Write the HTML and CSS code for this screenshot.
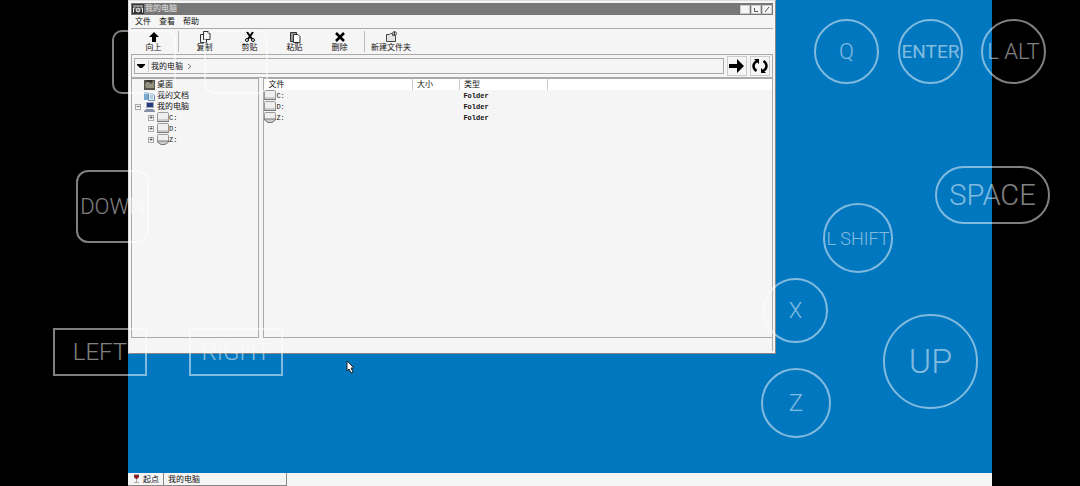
FILE: index.html
```html
<!DOCTYPE html>
<html lang="zh-CN">
<head>
<meta charset="utf-8">
<meta name="viewport" content="width=device-width, initial-scale=1">
<title>我的电脑</title>
<link rel="stylesheet" href="styles.css">
</head>
<body>
<svg class="defs" aria-hidden="true">
  <symbol id="drive" viewBox="0 0 12 11"><path d="M.5 1.500q0-1 1-1h9q1 0 1 1v8h-11z" fill="#efefef" stroke="#999"/><path d="M1 7h10v2H1z" fill="#ccc"/><path d="M0 9.500h12" stroke="#777"/></symbol>
  <symbol id="netdrive" viewBox="0 0 12 11"><path d="M.5 1.500q0-1 1-1h9q1 0 1 1v6h-11z" fill="#efefef" stroke="#999"/><path d="M.5 7h11v1L8 10.500H4L.5 8z" fill="#ccc" stroke="#777"/></symbol>
</svg>
<div class="screen">
  <main class="desktop">
    <section class="window">
      <header class="titlebar">
        <svg class="title-icon" viewBox="0 0 12 10"><path d="M0 0h12v10H0z" fill="#333"/><path d="M1 2h10M1.500 8.500V4h2m7 4.500V4h-2" stroke="#eee" fill="none"/><circle cx="6" cy="6" r="2" fill="#888" stroke="#eee"/></svg>
        <h1 class="title">我的电脑</h1>
        <button class="winbtn" aria-label="最小化"></button>
        <button class="winbtn" aria-label="最大化"><svg viewBox="0 0 8 7"><path d="M2.500 2v3.500H6" fill="none" stroke="#555"/></svg></button>
        <button class="winbtn" aria-label="关闭"><svg viewBox="0 0 8 7"><path d="M2 6l4-5" stroke="#555"/></svg></button>
      </header>
      <nav class="menu"><button>文件</button><button>查看</button><button>帮助</button></nav>
      <div class="toolbar">
        <button class="tool"><svg viewBox="0 0 12 12"><path d="M6 1l5 5H8v5H4V6H1z"/></svg>向上</button>
        <span class="divider"></span>
        <button class="tool"><svg viewBox="0 0 12 12"><path d="M4.500.5H9l2 2v6H4.500z M9 .5v2h2 M4.500 3.500h-3v8h6v-3" fill="none" stroke="#333"/></svg>复制</button>
        <button class="tool"><svg viewBox="0 0 12 12"><path d="M3 1l5 7M9 1L4 8" stroke="#000" stroke-width="2"/><circle cx="3" cy="9" r="1.500" fill="none" stroke="#000"/><circle cx="9" cy="9" r="1.500" fill="none" stroke="#000"/></svg>剪贴</button>
        <button class="tool"><svg viewBox="0 0 12 12"><path d="M4 10.500H1.500v-9h6V3" fill="#999" stroke="#333"/><path d="M4.500 3.500H9l2 2v6H4.500z" fill="#fff" stroke="#333"/></svg>粘贴</button>
        <button class="tool"><svg viewBox="0 0 12 12"><path d="M2 2l8 8M10 2l-8 8" stroke="#000" stroke-width="2.500"/></svg>删除</button>
        <span class="divider"></span>
        <button class="tool tool-wide"><svg viewBox="0 0 12 12"><path d="M1.500 10.500v-7h3l1-1h2v2h3v6z" fill="#e4e4e4" stroke="#444"/><circle cx="9.500" cy="2.500" r="2" fill="#ddd" stroke="#555"/><path d="M9.500 1v3" stroke="#333"/></svg>新建文件夹</button>
      </div>
      <div class="address">
        <div class="path">
          <button class="drop" aria-label="历史"><svg viewBox="0 0 8 5"><path d="M0 0h8v1L5 4H3L0 1z"/></svg></button>
          <a class="crumb" href="#">我的电脑</a>
          <svg class="chevron" viewBox="0 0 5 7"><path d="M1 1l3 2.500L1 6" fill="none" stroke="#777"/></svg>
        </div>
        <button class="go" aria-label="转到"><svg viewBox="0 0 16 14"><path d="M0 5h8V0l7 7-7 7V9H0z"/></svg></button>
        <button class="go" aria-label="刷新"><svg viewBox="0 0 16 14"><path d="M5 2Q1.500 4 1.500 7t3 5M11 12q3.500-2 3.500-5t-3-5" fill="none" stroke="#000" stroke-width="2.500"/><path d="M2 0h5v5zM14 14H9V9z"/></svg></button>
      </div>
      <div class="panes">
        <ul class="tree">
          <li><svg class="ticon" viewBox="0 0 11 10"><path d="M0 0h11v10H0z" fill="#55544c"/><path d="M1 4l3-3 3 3 3-3v7H2z" fill="#94917e"/><path d="M2 0h6v2H3z" fill="#35352f"/></svg>桌面</li>
          <li><svg class="ticon" viewBox="0 0 11 10"><path d="M0 1h4l1 1h3v7H0z" fill="#78a9d1"/><path d="M4.500 2.500h4l2 2v5h-6z" fill="#e5f0fa" stroke="#668bad"/><path d="M6 5h3M6 7h3" stroke="#79a2c7"/></svg>我的文档</li>
          <li class="root"><span class="box">−</span><svg class="ticon" viewBox="0 0 11 10"><path d="M2.500.5h7v5h-7z" fill="#243b83" stroke="#a3a8b8"/><path d="M0 9l2-2h7l2 2v1H0z" fill="#8790a7"/></svg>我的电脑</li>
          <li class="sub"><span class="box">+</span><svg class="dicon"><use href="#drive"/></svg><span class="mono">C:</span></li>
          <li class="sub"><span class="box">+</span><svg class="dicon"><use href="#drive"/></svg><span class="mono">D:</span></li>
          <li class="sub"><span class="box">+</span><svg class="dicon"><use href="#netdrive"/></svg><span class="mono">Z:</span></li>
        </ul>
        <div class="list">
          <table class="files">
            <thead><tr><th class="c-name">文件</th><th class="c-size">大小</th><th class="c-type">类型</th><th></th></tr></thead>
            <tbody>
              <tr><td><span class="name"><svg class="dicon"><use href="#drive"/></svg>C:</span></td><td></td><td class="type">Folder</td><td></td></tr>
              <tr><td><span class="name"><svg class="dicon"><use href="#drive"/></svg>D:</span></td><td></td><td class="type">Folder</td><td></td></tr>
              <tr><td><span class="name"><svg class="dicon"><use href="#netdrive"/></svg>Z:</span></td><td></td><td class="type">Folder</td><td></td></tr>
            </tbody>
          </table>
        </div>
      </div>
      <footer class="status"></footer>
    </section>
    <footer class="taskbar">
      <button class="start"><svg viewBox="0 0 7 10"><path d="M1 0h5v3L4 5v3h2v1H1V8h2V5L1 3z" fill="#aaa"/><path d="M1 1h5v2L4 5H3L1 3z" fill="#8d1f2a"/></svg>起点</button>
      <button class="task">我的电脑</button>
    </footer>
  </main>
  <svg class="cursor" viewBox="0 0 9 14"><path d="M1 1v10l2-2 2 4 2-1-2-4h3z" fill="#fff" stroke="#222"/></svg>
  <button class="key k-a" aria-label="左上键"></button>
  <button class="key k-b" aria-label="上方键"></button>
  <button class="key k-down">DOWN</button>
  <button class="key k-left">LEFT</button>
  <button class="key k-right">RIGHT</button>
  <button class="key round k-q">Q</button>
  <button class="key round k-enter">ENTER</button>
  <button class="key round k-alt">L ALT</button>
  <button class="key round k-space">SPACE</button>
  <button class="key round k-shift">L SHIFT</button>
  <button class="key round k-x">X</button>
  <button class="key round k-z">Z</button>
  <button class="key round k-up">UP</button>
</div>
</body>
</html>
```
FILE: styles.css
```css
* { box-sizing: border-box; }
body { margin: 0; background: #000; font: 8px/11px "Liberation Sans", "Noto Sans CJK SC", sans-serif; color: #111; }
button { margin: 0; padding: 0; border: 0; background: none; font: inherit; color: inherit; }
ul { margin: 0; padding: 0; list-style: none; }
.defs { position: absolute; width: 0; height: 0; }
.screen { position: relative; min-height: 100vh; display: flex; padding: 0 88px 0 128px; overflow: hidden; }
.desktop { flex: 1; display: flex; flex-direction: column; justify-content: space-between; background: #0077bf; }

.window { width: 75%; padding: 2px; background: #f5f5f5; border: 1px solid #ddd; border-right-color: #888; border-bottom-color: #888; }
.titlebar { display: flex; align-items: center; height: 12px; padding: 0 1px; background: #777; }
.title-icon { width: 12px; height: 10px; margin-right: 1px; }
.title { flex: 1; margin: 0; font-size: 8px; line-height: 12px; font-weight: 700; color: #c8c8c8; }
.winbtn { width: 10px; height: 9px; margin-left: 1px; background: #f5f5f5; border: 1px solid #ccc; display: flex; }
.winbtn svg { width: 100%; height: 100%; }
.menu { display: flex; gap: 8px; height: 14px; padding: 0 4px; border-bottom: 1px solid #aaa; }
.toolbar { display: flex; height: 25px; padding: 2px 0; }
.tool { width: 45px; display: flex; flex-direction: column; align-items: center; line-height: 9px; }
.tool svg { width: 12px; height: 12px; flex: none; }
.tool-wide { width: 48px; }
.divider { width: 1px; border-left: 1px solid #bbb; }
.divider + .tool { margin-left: 3px; }
.tool + .divider { margin-left: 2px; }
.divider + .tool-wide { margin-left: 2px; }

.address { display: flex; align-items: center; gap: 3px; height: 24px; padding: 0 2px; border: 1px solid #aaa; }
.path { flex: 1; display: flex; align-items: center; height: 16px; padding: 0 2px; border: 1px solid #aaa; }
.drop { width: 12px; height: 12px; border-right: 1px solid #ccc; display: flex; align-items: center; }
.drop svg { width: 8px; height: 5px; }
.crumb { margin-left: 2px; color: inherit; text-decoration: none; }
.chevron { width: 5px; height: 7px; margin-left: 4px; }
.go { width: 20px; height: 20px; display: flex; align-items: center; justify-content: center; border: 1px solid #ccc; }
.go svg { width: 16px; height: 14px; }

.panes { display: flex; gap: 4px; min-height: 260px; }
.tree { width: 20%; border: 1px solid #aaa; }
.tree li { display: flex; align-items: center; height: 11px; padding-left: 12px; white-space: nowrap; }
.tree .root { padding-left: 3px; }
.tree .sub { padding-left: 16px; }
.ticon { width: 11px; height: 10px; margin-right: 2px; }
.dicon { width: 12px; height: 11px; flex: none; }
.box { width: 6px; height: 6px; margin-right: 3px; border: 1px solid #aaa; font-size: 7px; line-height: 4px; text-align: center; }
.mono, .files td { font: 7px/10px "Liberation Mono", monospace; }
.list { flex: 1; border: 1px solid #aaa; }
.files { width: 100%; table-layout: fixed; border-collapse: collapse; }
.files th { height: 11px; padding: 0 4px; background: #fff; border-right: 1px solid #ccc; font-weight: 400; line-height: 11px; text-align: left; }
.files th:last-child { border-right: 0; }
.files td { height: 11px; padding: 0; }
.files .type { padding-left: 4px; font-weight: 700; }
.c-name { width: 148px; }
.c-size { width: 47px; }
.c-type { width: 88px; }
.name { display: flex; align-items: center; height: 11px; }
.status { height: 13px; border-right: 1px solid #aaa; }

.taskbar { display: flex; height: 13px; background: #f5f5f5; }
.start { display: flex; align-items: center; gap: 3px; width: 36px; padding-left: 5px; border-right: 1px solid #888; border-bottom: 1px solid #888; }
.start svg { width: 7px; height: 10px; }
.task { width: 123px; padding-left: 4px; text-align: left; border-right: 1px solid #888; border-bottom: 1px solid #888; }

.cursor { position: absolute; left: 346px; top: 360px; width: 9px; height: 14px; }
.key { position: absolute; display: flex; align-items: center; justify-content: center; border: 2px solid #fff; opacity: .5; color: #fff; font-family: Roboto, sans-serif; font-weight: 300; white-space: nowrap; }
.round { border-radius: 40px; }
.k-a { left: 112px; top: 30px; width: 64px; height: 64px; border-radius: 10px; }
.k-b { left: 204px; top: 30px; width: 64px; height: 64px; border-radius: 10px; }
.k-down { left: 76px; top: 170px; width: 73px; height: 73px; border-radius: 12px; font-size: 22px; }
.k-left { left: 53px; top: 328px; width: 94px; height: 48px; font-size: 24px; }
.k-right { left: 189px; top: 328px; width: 94px; height: 48px; font-size: 24px; }
.k-q { left: 814px; top: 19px; width: 65px; height: 65px; font-size: 22px; }
.k-enter { left: 898px; top: 19px; width: 65px; height: 65px; font-size: 19px; font-weight: 400; }
.k-alt { left: 981px; top: 19px; width: 65px; height: 65px; font-size: 22px; }
.k-space { left: 935px; top: 166px; width: 115px; height: 58px; font-size: 29px; }
.k-shift { left: 823px; top: 203px; width: 70px; height: 70px; font-size: 18px; }
.k-x { left: 763px; top: 278px; width: 65px; height: 65px; font-size: 22px; }
.k-z { left: 761px; top: 368px; width: 70px; height: 70px; font-size: 24px; }
.k-up { left: 883px; top: 314px; width: 95px; height: 95px; font-size: 34px; border-radius: 50px; }
```
